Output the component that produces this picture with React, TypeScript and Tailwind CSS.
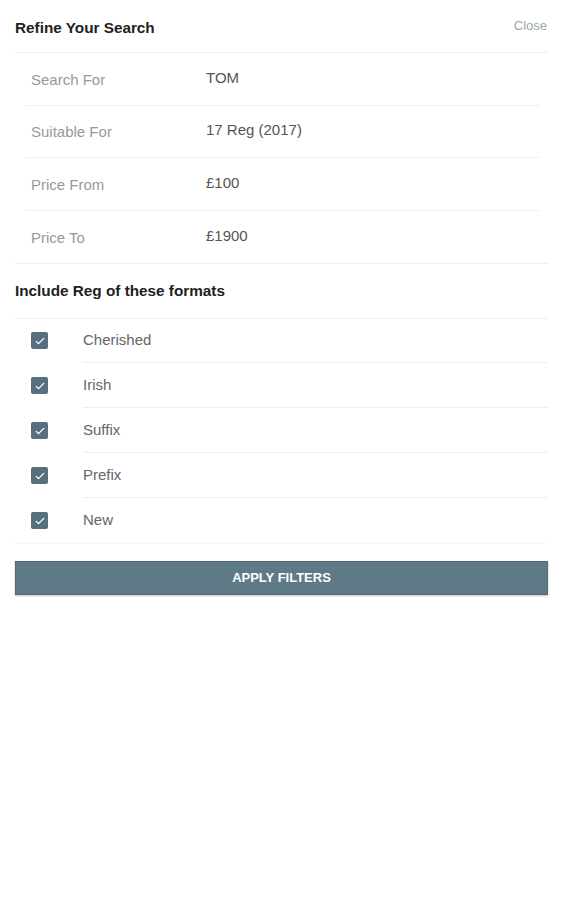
const FIELDS = [
  { label: "Search For", value: "TOM" },
  { label: "Suitable For", value: "17 Reg (2017)" },
  { label: "Price From", value: "£100" },
  { label: "Price To", value: "£1900" },
];

const FORMATS = ["Cherished", "Irish", "Suffix", "Prefix", "New"];

/** Filled slate checkbox with a white tick. */
function CheckBox() {
  return (
    <span className="grid h-[17px] w-[17px] place-items-center rounded-[2px] bg-[#56707d]">
      <svg viewBox="0 0 16 16" className="h-3 w-3" fill="none" stroke="white" strokeWidth={1.8} strokeLinecap="round" strokeLinejoin="round" aria-hidden="true">
        <path d="M3 8.5l3 3 7-7" />
      </svg>
    </span>
  );
}

export default function App() {
  return (
    <div className="min-h-[900px] bg-white px-[15px] font-['Liberation_Sans',Arial,sans-serif]">
      <div className="flex h-[53px] items-center justify-between border-b border-[#efefef] pb-[1px]">
        <h1 className="mt-[5px] text-[15.3px] font-bold text-[#222]">Refine Your Search</h1>
        <button type="button" className="mr-[1px] text-[13px] text-[#9aa6ad]">
          Close
        </button>
      </div>

      <div className="border-b border-[#efefef]">
        <div className="ml-[11px] mr-[8px]">
          {FIELDS.map((f, i) => (
            <div
              key={f.label}
              className={`flex h-[52.5px] items-center text-[15px] ${
                i < FIELDS.length - 1 ? "border-b border-[#f0f0f0]" : ""
              }`}
            >
              <span className="w-[180px] pl-[5px] pt-[2px] text-[#999]">{f.label}</span>
              <span className="pb-[2px] text-[#555]">{f.value}</span>
            </div>
          ))}
        </div>
      </div>

      <div className="flex h-[55px] items-center border-b border-[#efefef]">
        <h2 className="text-[15.3px] font-bold text-[#222]">Include Reg of these formats</h2>
      </div>

      <div className="-mt-[1px] border-b border-[#f6f6f6]">
        {FORMATS.map((name, i) => (
          <div key={name} className="flex h-[45px] items-stretch">
            <div className="flex w-[68px] items-center pl-4">
              <CheckBox />
            </div>
            <div
              className={`flex flex-1 items-center text-[15px] text-[#666] ${
                i < FORMATS.length - 1 ? "border-b border-[#efefef]" : ""
              }`}
            >
              {name}
            </div>
          </div>
        ))}
      </div>

      <button
        type="button"
        className="mt-[17px] flex h-[34px] w-full items-center justify-center border border-[#4f6a77] bg-[#5f7a87] text-[13px] font-bold text-white shadow-[0_1px_2px_rgba(0,0,0,0.25)]"
      >
        APPLY FILTERS
      </button>
    </div>
  );
}
